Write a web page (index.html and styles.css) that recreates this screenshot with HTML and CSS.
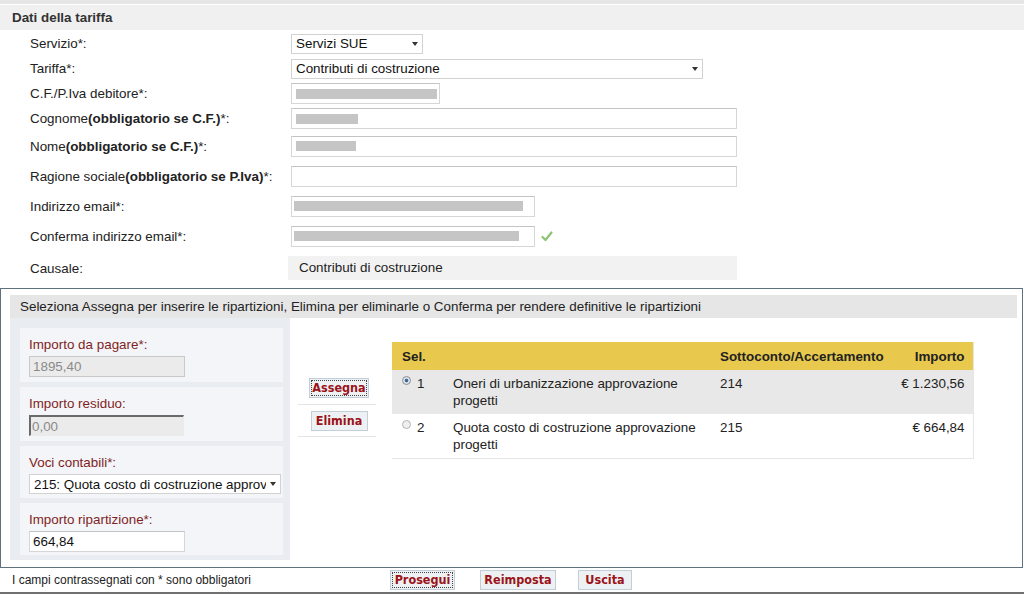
FILE: index.html
```html
<!DOCTYPE html>
<html lang="it">
<head>
<meta charset="utf-8">
<title>Dati della tariffa</title>
<link rel="stylesheet" href="styles.css">
</head>
<body>
<div class="topline"></div>
<h1 class="section-title">Dati della tariffa</h1>
<div class="form">
  <div class="row"><label>Servizio*:</label><div class="ctrl"><div class="select w-servizio"><span>Servizi SUE</span><i class="caret"></i></div></div></div>
  <div class="row"><label>Tariffa*:</label><div class="ctrl"><div class="select w-tariffa"><span>Contributi di costruzione</span><i class="caret"></i></div></div></div>
  <div class="row"><label>C.F./P.Iva debitore*:</label><div class="ctrl"><div class="input w-cf"><span class="redact r-cf"></span></div></div></div>
  <div class="row"><label>Cognome<b>(obbligatorio se C.F.)</b>*:</label><div class="ctrl"><div class="input w-wide"><span class="redact r-cognome"></span></div></div></div>
  <div class="row h30"><label>Nome<b>(obbligatorio se C.F.)</b>*:</label><div class="ctrl"><div class="input w-wide"><span class="redact r-nome"></span></div></div></div>
  <div class="row h30"><label>Ragione sociale<b>(obbligatorio se P.Iva)</b>*:</label><div class="ctrl"><div class="input w-wide"></div></div></div>
  <div class="row h30"><label>Indirizzo email*:</label><div class="ctrl"><div class="input w-email"><span class="redact r-email"></span></div></div></div>
  <div class="row h30"><label>Conferma indirizzo email*:</label><div class="ctrl"><div class="input w-email"><span class="redact r-email2"></span></div><svg class="check" width="12" height="11" viewBox="0 0 12 11"><path d="M1.5 6 L4.5 9 L10.5 1.5" fill="none" stroke="#8cc476" stroke-width="2.2" stroke-linecap="round" stroke-linejoin="round"/></svg></div></div>
  <div class="row h34"><label>Causale:</label><div class="ctrl"><div class="causale">Contributi di costruzione</div></div></div>
</div>

<div class="assign">
  <div class="assign-head">Seleziona Assegna per inserire le ripartizioni, Elimina per eliminarle o Conferma per rendere definitive le ripartizioni</div>
  <div class="assign-body">
    <div class="panel">
      <div class="field">
        <div class="flabel">Importo da pagare*:</div>
        <div class="input disabled w-amount">1895,40</div>
      </div>
      <div class="field">
        <div class="flabel">Importo residuo:</div>
        <div class="input disabled inset w-amount2">0,00</div>
      </div>
      <div class="field short">
        <div class="flabel">Voci contabili*:</div>
        <div class="select w-voci"><span>215: Quota costo di costruzione approv</span><i class="caret"></i></div>
      </div>
      <div class="field short">
        <div class="flabel">Importo ripartizione*:</div>
        <div class="input w-amount">664,84</div>
      </div>
    </div>
    <div class="actions">
      <div class="btn-cell first"><button class="btn focus b-assegna">Assegna</button></div>
      <div class="btn-cell"><button class="btn b-elimina">Elimina</button></div>
    </div>
    <table class="grid">
      <colgroup><col class="c-sel"><col class="c-desc"><col class="c-sott"><col class="c-imp"></colgroup>
      <thead>
        <tr><th>Sel.</th><th></th><th>Sottoconto/Accertamento</th><th class="num">Importo</th></tr>
      </thead>
      <tbody>
        <tr class="alt"><td><span class="radio on"></span>1</td><td>Oneri di urbanizzazione approvazione progetti</td><td>214</td><td class="num">€ 1.230,56</td></tr>
        <tr><td><span class="radio"></span>2</td><td>Quota costo di costruzione approvazione progetti</td><td>215</td><td class="num">€ 664,84</td></tr>
      </tbody>
    </table>
  </div>
</div>

<div class="footer">
  <div class="note">I campi contrassegnati con * sono obbligatori</div>
  <button class="btn focus b-prosegui">Prosegui</button>
  <button class="btn b-reimposta">Reimposta</button>
  <button class="btn b-uscita">Uscita</button>
</div>
</body>
</html>
```

FILE: styles.css
```css
html, body {
  margin: 0;
  padding: 0;
}
body {
  width: 1024px;
  height: 595px;
  overflow: hidden;
  background: #fff;
  color: #222;
  font-family: "Liberation Sans", Arial, sans-serif;
  font-size: 13.4px;
}

.topline {
  height: 4px;
  background: #e6e6e6;
}
.section-title {
  margin: 1px 0 0;
  height: 25px;
  line-height: 25px;
  padding-left: 12px;
  background: #f0f0f0;
  font-size: 13.4px;
  font-weight: bold;
  color: #333;
}

/* main form */
.form {
  padding-left: 30px;
  margin-top: 1px;
}
.row {
  display: grid;
  grid-template-columns: 261px 1fr;
  align-items: center;
  height: 25px;
}
.row.h30 { height: 30px; }
.row.h34 { height: 34px; }
.row label b { font-weight: bold; }
.ctrl {
  display: flex;
  align-items: center;
  gap: 6px;
}

.select {
  display: flex;
  align-items: center;
  height: 20px;
  box-sizing: border-box;
  border: 1px solid #d2d2d2;
  background: #fff;
  padding-left: 4px;
  color: #111;
  white-space: nowrap;
  overflow: hidden;
}
.select span { flex: 1; overflow: hidden; }
.caret {
  flex: none;
  width: 0;
  height: 0;
  border-left: 3px solid transparent;
  border-right: 3px solid transparent;
  border-top: 4px solid #333;
  margin: 0 4px 0 4px;
}
.w-servizio { width: 132px; }
.w-tariffa { width: 412px; }

.input {
  display: flex;
  align-items: center;
  height: 21px;
  box-sizing: border-box;
  border: 1px solid #d6d6d6;
  border-top-color: #c4c4c4;
  background: #fff;
  padding-left: 3px;
  color: #111;
}
.w-cf { width: 149px; }
.w-wide { width: 446px; }
.w-email { width: 244px; }

.redact {
  display: block;
  height: 10px;
  background: #c5c5c5;
  margin-left: 1px;
}
.r-cf { width: 141px; }
.r-cognome { width: 62px; }
.r-nome { width: 60px; }
.r-email { width: 229px; margin-left: -1px; }
.r-email2 { width: 225px; margin-left: -1px; }

.causale {
  margin-left: -3px;
  width: 449px;
  height: 24px;
  line-height: 24px;
  box-sizing: border-box;
  padding-left: 11px;
  background: #f2f2f2;
  color: #222;
}

/* assign block */
.assign {
  margin-top: 3px;
  width: 1023px;
  height: 280px;
  box-sizing: border-box;
  border: 1px solid #5f717c;
  padding: 6px 5px 0 9px;
}
.assign-head {
  height: 23px;
  line-height: 23px;
  background: #e6e6e6;
  padding-left: 10px;
  color: #222;
  white-space: nowrap;
}
.assign-body {
  display: flex;
  align-items: flex-start;
}
.panel {
  width: 280px;
  box-sizing: border-box;
  background: #e9ecf1;
  padding: 10px 7px 5px 10px;
  display: flex;
  flex-direction: column;
  gap: 5px;
}
.field {
  height: 54px;
  box-sizing: border-box;
  background: #f4f5f8;
  padding: 9px 0 0 9px;
}
.field.short { height: 52px; }
.flabel {
  height: 15px;
  line-height: 15px;
  margin-bottom: 4px;
  color: #7f1f24;
}
.w-amount { width: 156px; }
.w-amount2 { width: 155px; }
.w-voci { width: 252px; }
.input.disabled {
  background: #ebebeb;
  border-color: #c9c9c9;
  color: #8a8a8a;
}
.input.inset {
  border: 1px solid #ebebeb;
  border-top: 2px solid #6a6a6a;
  border-left: 2px solid #6a6a6a;
  padding-left: 1px;
}

.actions {
  width: 78px;
  margin-left: 8px;
  margin-top: 60px;
}
.btn-cell {
  border-bottom: 1px solid #e4e4e4;
  padding: 6px 0 5px 4px;
  text-align: center;
}
.btn-cell.first {
  padding-top: 0;
  padding-bottom: 6px;
}

.btn {
  height: 20px;
  box-sizing: border-box;
  padding: 0;
  border: 1px solid #c3ced6;
  background: #eef1f4;
  color: #9b1318;
  font-family: "DejaVu Sans Condensed", "DejaVu Sans", sans-serif;
  font-stretch: condensed;
  font-weight: bold;
  font-size: 12.5px;
  line-height: 18px;
  text-align: center;
  cursor: pointer;
}
.btn.focus {
  outline: 1px dotted #444;
  outline-offset: -3px;
}
.b-assegna { width: 60px; }
.b-elimina { width: 57px; }
.b-prosegui { width: 65px; }
.b-reimposta { width: 76px; margin-left: 25px; }
.b-uscita { width: 54px; margin-left: 22px; }

.grid {
  margin-left: 16px;
  margin-top: 24px;
  width: 581px;
  border-collapse: collapse;
  table-layout: fixed;
  border-right: 1px solid #e6e6e6;
  border-bottom: 1px solid #e6e6e6;
}
.c-sel { width: 51px; }
.c-desc { width: 267px; }
.c-sott { width: 180px; }
.c-imp { width: 83px; }
.grid th {
  height: 28px;
  padding: 0 0 0 10px;
  background: #e8c94d;
  text-align: left;
  font-weight: bold;
  color: #222;
  white-space: nowrap;
}
.grid td {
  height: 44px;
  box-sizing: border-box;
  vertical-align: top;
  padding: 5px 0 5px 10px;
  line-height: 17px;
  color: #222;
}
.grid th:nth-child(2), .grid td:nth-child(2) {
  padding-right: 10px;
}
.grid .num {
  text-align: right;
  padding-right: 8px;
  padding-left: 0;
}
.grid tr.alt td { background: #e8e8e8; }

.radio {
  display: inline-block;
  width: 9px;
  height: 9px;
  box-sizing: border-box;
  border: 1px solid #b3b3b3;
  border-radius: 50%;
  background: #efefef;
  margin-right: 6px;
  vertical-align: 3px;
}
.radio.on {
  border-color: #8a8f96;
  background: radial-gradient(circle, #3e6a9c 0, #3e6a9c 1.6px, #dfe3e8 2.2px);
}

/* footer */
.footer {
  display: flex;
  align-items: center;
  height: 24px;
  padding-left: 12px;
  border-bottom: 2px solid #6f6f6f;
}
.note {
  width: 378px;
  font-size: 12px;
  color: #222;
}
```
